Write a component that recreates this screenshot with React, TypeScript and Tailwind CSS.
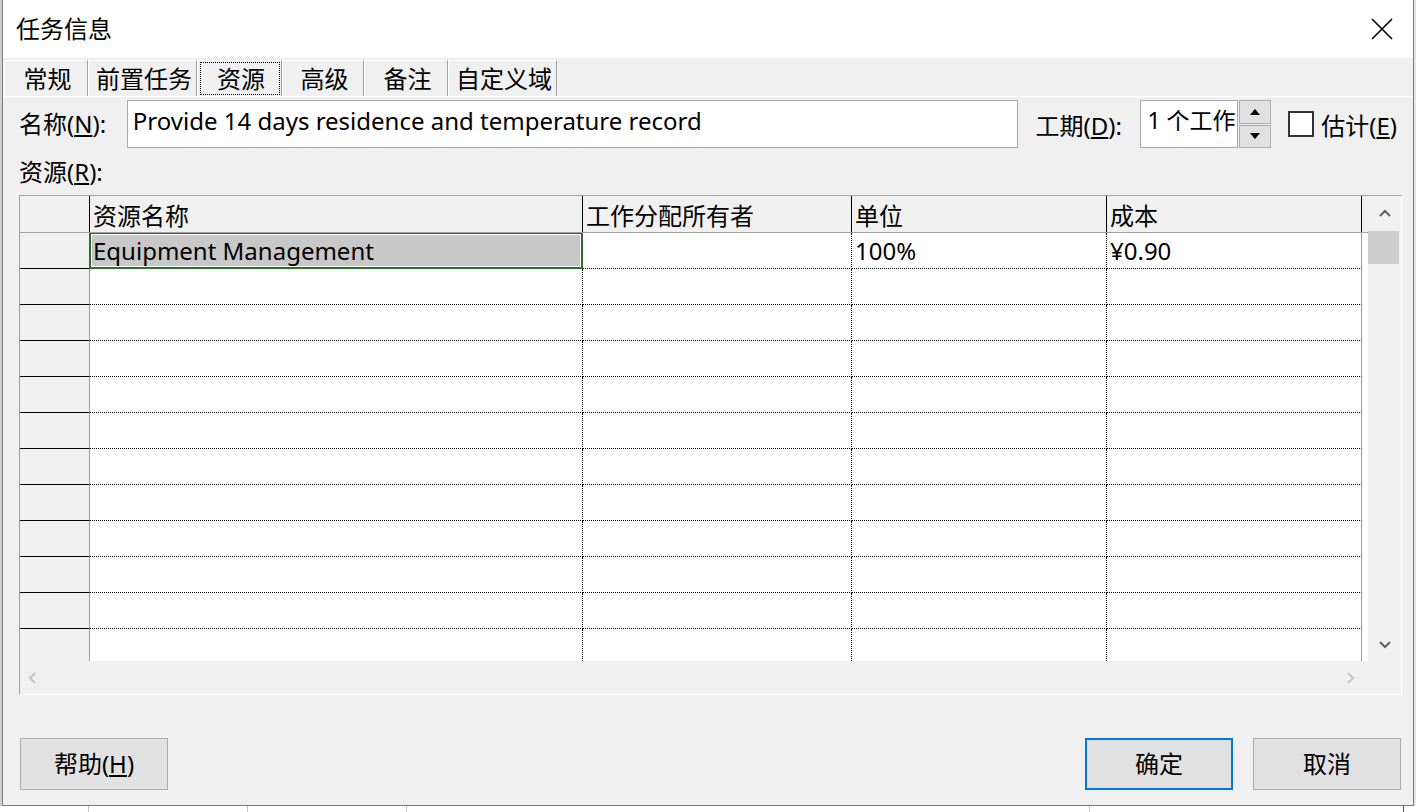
import React from "react";

const font = "font-['Segoe_UI','Noto_Sans','Noto_Sans_CJK_SC',sans-serif]";

const tabs = [
  { label: "常规", w: "w-[84px]" },
  { label: "前置任务", w: "w-[109px]" },
  { label: "资源", w: "w-[85px]", active: true },
  { label: "高级", w: "w-[82px]" },
  { label: "备注", w: "w-[84px]" },
  { label: "自定义域", w: "w-[109px]" },
];

const headers = [
  { title: "资源名称", w: "w-[493px]" },
  { title: "工作分配所有者", w: "w-[269px]" },
  { title: "单位", w: "w-[255px]" },
  { title: "成本", w: "w-[255px]" },
];

const rows = [
  ["Equipment Management", "", "100%", "¥0.90"],
  ...Array.from({ length: 11 }, () => ["", "", "", ""]),
];

const Chevron = ({ dir, color }: { dir: "up" | "down" | "left" | "right"; color: string }) => {
  const paths = {
    up: "M1 7 L6 2 L11 7",
    down: "M1 2 L6 7 L11 2",
    left: "M7 1 L2 6 L7 11",
    right: "M2 1 L7 6 L2 11",
  };
  const vertical = dir === "up" || dir === "down";
  return (
    <svg width={vertical ? 12 : 9} height={vertical ? 9 : 12} viewBox={vertical ? "0 0 12 9" : "0 0 9 12"}>
      <path d={paths[dir]} fill="none" stroke={color} strokeWidth="2" />
    </svg>
  );
};

const U = ({ children }: { children: React.ReactNode }) => <span className="underline underline-offset-2">{children}</span>;

const ResourceGrid = () => {
  return (
    <div className="w-[1383px] h-[500px] border-t border-l border-[#a0a0a0] border-r border-b border-r-white border-b-white flex flex-col bg-[#f0f0f0]">
      <div className="flex h-[465px]">
        <div className="w-[1348px] flex flex-col bg-white">
          {/* header */}
          <div className="flex h-[37px] bg-[#f0f0f0] border-b border-[#a0a0a0]">
            <div className="w-[70px] h-full border-r border-black" />
            {headers.map((h) => (
              <div key={h.title} className={`${h.w} h-full border-r border-black pl-[3px] flex items-center pt-[3px] whitespace-nowrap`}>
                {h.title}
              </div>
            ))}
          </div>
          {/* rows */}
          <div className="h-[428px] overflow-hidden">
            {rows.map((r, i) => (
              <div key={i} className="flex h-[36px]">
                <div className="w-[70px] h-full bg-[#f0f0f0] border-b border-r border-b-black border-r-[#a0a0a0]" />
                {r.map((cell, j) => (
                  <div
                    key={j}
                    className={`${headers[j].w} h-full relative border-b border-r border-dotted border-black pl-[3px] flex items-center whitespace-nowrap ${
                      j === 3 ? "[border-right-style:solid] border-r-[#a0a0a0]" : ""
                    } ${i === 0 && j === 0 ? "bg-[#c8c8c8]" : ""}`}
                  >
                    {cell}
                    {i === 0 && j === 0 && (
                      <div className="absolute -left-[1px] -top-[1px] -right-[1px] -bottom-[1px] border-2 border-[#2f6e2f] shadow-[inset_0_0_0_1px_#ffffff]" />
                    )}
                  </div>
                ))}
              </div>
            ))}
          </div>
        </div>
        {/* vertical scrollbar */}
        <div className="w-[33px] h-full flex flex-col bg-[#f0f0f0]">
          <div className="h-[35px] flex items-center justify-center">
            <Chevron dir="up" color="#606060" />
          </div>
          <div className="w-[31px] h-[33px] bg-[#cdcdcd]" />
          <div className="flex-1" />
          <div className="h-[34px] flex items-center justify-center">
            <Chevron dir="down" color="#606060" />
          </div>
        </div>
      </div>
      {/* horizontal scrollbar */}
      <div className="h-[33px] flex items-center justify-between px-[8px]">
        <Chevron dir="left" color="#c4c4c4" />
        <div className="mr-[38px]">
          <Chevron dir="right" color="#c4c4c4" />
        </div>
      </div>
    </div>
  );
};

const Button = ({ children, primary }: { children: React.ReactNode; primary?: boolean }) => (
  <div
    className={`w-[148px] h-[52px] bg-[#e1e1e1] flex items-center justify-center ${
      primary ? "border-2 border-[#0078d7]" : "border border-[#adadad]"
    }`}
  >
    {children}
  </div>
);

export default function App() {
  return (
    <div className={`w-[1416px] h-[812px] overflow-hidden bg-white text-black text-[24px] leading-none ${font}`}>
      <div className="flex h-[806px]">
        <div className="w-[2px] bg-[#cfcfcf]" />
        <div className="w-[1412px] h-[806px] border-l border-r border-b border-[#7a7a7a] bg-[#f0f0f0] flex flex-col">
          {/* title bar */}
          <div className="h-[58px] bg-white flex items-center justify-between pl-[13px] pr-[20px]">
            <span>任务信息</span>
            <svg width="22" height="22" viewBox="0 0 22 22">
              <path d="M1 1 L21 21 M21 1 L1 21" stroke="#000" strokeWidth="1.6" />
            </svg>
          </div>
          {/* tabs */}
          <div className="h-[38px] flex items-end pl-[1px]">
            {tabs.map((t) => (
              <div
                key={t.label}
                className={`${t.w} h-[36px] border-l border-t border-white border-r border-r-[#a0a0a0] flex items-center justify-center pl-[3px]`}
              >
                {t.active ? (
                  <span className="w-[80px] h-[33px] -ml-[3px] border border-dotted border-black flex items-center justify-center pl-[3px]">
                    {t.label}
                  </span>
                ) : (
                  <span className="whitespace-nowrap">{t.label}</span>
                )}
              </div>
            ))}
          </div>
          {/* panel */}
          <div className="flex-1 border-t border-white px-[16px] pt-[3px] flex flex-col">
            <div className="flex h-[48px] items-center">
              <div className="w-[108px]">
                名称(<U>N</U>):
              </div>
              <div className="w-[892px] h-full bg-white border border-[#a8a8a8] pl-[5px] pt-[8px] whitespace-nowrap overflow-hidden">
                Provide 14 days residence and temperature record
              </div>
              <div className="w-[105px] ml-[18px] pt-[3px]">
                工期(<U>D</U>):
              </div>
              <div className="w-[98px] h-full bg-white border border-[#a8a8a8] pl-[6px] pt-[8px] text-[23px] whitespace-nowrap overflow-hidden">
                1 个工作
              </div>
              <div className="w-[32px] h-full ml-[1px] flex flex-col gap-[1px]">
                <div className="flex-1 bg-[#e1e1e1] border border-[#adadad] flex items-center justify-center">
                  <svg width="10" height="6" viewBox="0 0 10 6"><path d="M0 6 L5 0 L10 6 Z" fill="#000" /></svg>
                </div>
                <div className="flex-1 bg-[#e1e1e1] border border-[#adadad] flex items-center justify-center">
                  <svg width="10" height="6" viewBox="0 0 10 6"><path d="M0 0 L5 6 L10 0 Z" fill="#000" /></svg>
                </div>
              </div>
              <div className="w-[26px] h-[26px] ml-[17px] bg-white border-2 border-[#333333]" />
              <div className="ml-[7px] pt-[3px] whitespace-nowrap">
                估计(<U>E</U>)
              </div>
            </div>
            <div className="h-[47px] flex items-center">
              资源(<U>R</U>):
            </div>
            <ResourceGrid />
            <div className="flex justify-between mt-[43px] pl-[1px] mr-[-4px]">
              <Button>
                帮助(<U>H</U>)
              </Button>
              <div className="flex gap-[20px]">
                <Button primary>确定</Button>
                <Button>取消</Button>
              </div>
            </div>
          </div>
        </div>
        <div className="flex-1 bg-[#e6e6e6]" />
      </div>
      {/* application behind the dialog */}
      <div className="h-[6px] flex overflow-hidden bg-white">
        <div className="w-[89px] border-r border-[#c8c8c8]" />
        <div className="w-[159px] border-r border-[#c8c8c8]" />
        <div className="w-[159px] border-r border-[#c8c8c8]" />
        <div className="w-[683px] border-r border-[#c8c8c8]" />
        <div className="w-[314px] border-r border-[#555555]" />
      </div>
    </div>
  );
}
